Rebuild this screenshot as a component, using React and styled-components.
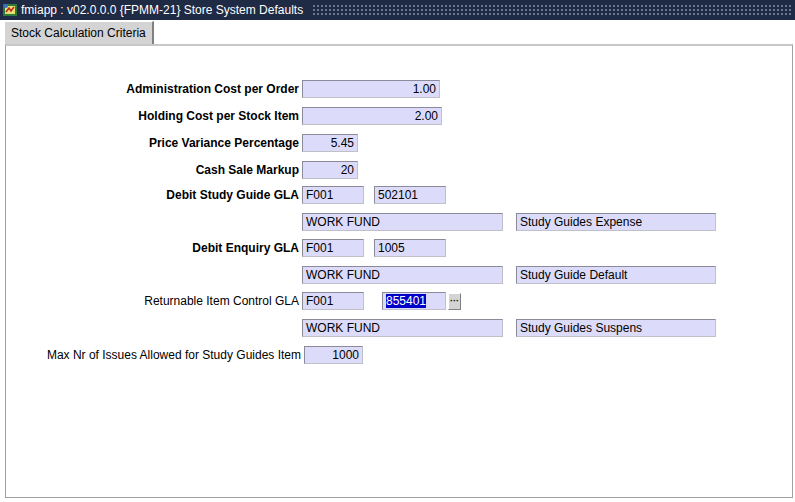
import React from "react";
import styled, { createGlobalStyle } from "styled-components";

const G = createGlobalStyle`
  body{margin:0;background:#fff;font-family:"Liberation Sans",Arial,sans-serif;}
`;
const Win = styled.div`width:795px;height:502px;background:#fff;display:flex;flex-direction:column;overflow:hidden;`;
const Title = styled.div`height:20px;background:#1f2a44;color:#fff;font-size:12px;display:flex;align-items:center;gap:3px;padding-left:2px;`;
const Dots = styled.div`flex:1;height:12px;margin:0 2px 0 6px;background-image:radial-gradient(#6a7590 0.8px,transparent 1px);background-size:4px 4px;`;
const TabRow = styled.div`height:24px;display:flex;align-items:flex-end;padding-left:4px;`;
const Tab = styled.div`height:22px;padding:0 6px;background:#d4d4d4;border:1px solid #fff;border-right:2px solid #808080;border-bottom:none;font-size:12px;display:flex;align-items:center;color:#000;`;
const Panel = styled.div`flex:1;margin:0 2px 4px 5px;border:1px solid #a0a0a0;border-top:2px solid #c8c8c8;padding-top:34px;`;
const Row = styled.div`display:flex;align-items:center;height:18px;margin-bottom:${p=>p.mb||9}px;`;
const Label = styled.div`width:${p=>p.w||296}px;text-align:right;padding-right:3px;box-sizing:border-box;font-size:12px;font-weight:${p=>p.b?"bold":"normal"};color:#000;white-space:nowrap;`;
const Field = styled.div`width:${p=>p.w}px;height:18px;box-sizing:border-box;margin-left:${p=>p.ml||0}px;background:#dcdcfa;border:1px solid #8a8a9a;border-right-color:#c0c0c8;border-bottom-color:#c0c0c8;font-size:12px;display:flex;align-items:center;justify-content:${p=>p.r?"flex-end":"flex-start"};padding:0 3px;color:#000;`;
const Sel = styled.span`background:#0000c8;color:#fff;`;
const Btn = styled.div`width:13px;height:17px;margin-left:2px;background:#d4d4d4;border:1px solid #fff;border-right-color:#808080;border-bottom-color:#808080;box-sizing:border-box;font-size:9px;display:flex;align-items:center;justify-content:center;font-weight:bold;`;

export default function App(){
  return <Win><G/>
    <Title>
      <svg width="16" height="16" viewBox="0 0 16 16"><rect x="1" y="2" width="14" height="12" fill="#2d7a3a"/><rect x="3" y="4" width="10" height="8" fill="#e8e070"/><path d="M4 10l3-4 2 3 3-4" stroke="#c02020" strokeWidth="1.5" fill="none"/><circle cx="4" cy="4" r="2" fill="#3a70d0"/></svg>
      <span>fmiapp : v02.0.0.0 {"{FPMM-21}"} Store System Defaults</span><Dots/>
    </Title>
    <TabRow><Tab>Stock Calculation Criteria</Tab></TabRow>
    <Panel>
      <Row><Label b>Administration Cost per Order</Label><Field w={138} r>1.00</Field></Row>
      <Row><Label b>Holding Cost per Stock Item</Label><Field w={140} r>2.00</Field></Row>
      <Row><Label b>Price Variance Percentage</Label><Field w={56} r>5.45</Field></Row>
      <Row mb={7}><Label b>Cash Sale Markup</Label><Field w={56} r>20</Field></Row>
      <Row><Label b>Debit Study Guide GLA</Label><Field w={62}>F001</Field><Field w={72} ml={10}>502101</Field></Row>
      <Row mb={8}><Label/><Field w={201}>WORK FUND</Field><Field w={200} ml={13}>Study Guides Expense</Field></Row>
      <Row><Label b>Debit Enquiry GLA</Label><Field w={62}>F001</Field><Field w={72} ml={10}>1005</Field></Row>
      <Row mb={8}><Label/><Field w={201}>WORK FUND</Field><Field w={200} ml={13}>Study Guide Default</Field></Row>
      <Row><Label>Returnable Item Control GLA</Label><Field w={62}>F001</Field><Field w={64} ml={18}><Sel>855401</Sel></Field><Btn>···</Btn></Row>
      <Row><Label/><Field w={201}>WORK FUND</Field><Field w={200} ml={13}>Study Guides Suspens</Field></Row>
      <Row><Label w={298}>Max Nr of Issues Allowed for Study Guides Item</Label><Field w={59} r>1000</Field></Row>
    </Panel>
  </Win>;
}
